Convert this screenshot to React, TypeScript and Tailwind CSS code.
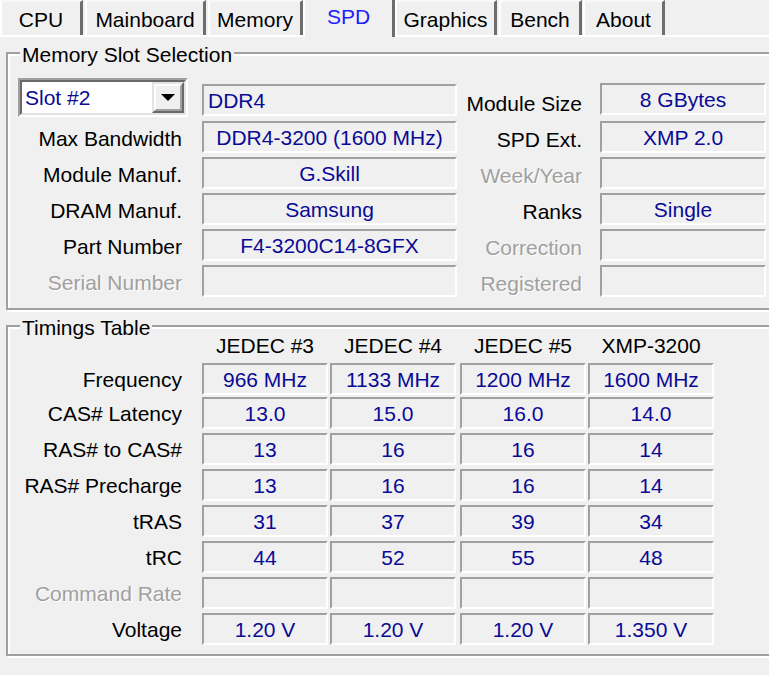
import React from "react";

type FieldProps = { value?: string; className?: string; left?: boolean };

function Field({ value = "", className = "", left }: FieldProps) {
  return (
    <div
      className={`flex h-[32px] shrink-0 items-center border-2 border-t-[#a0a0a0] border-l-[#a0a0a0] border-b-white border-r-white text-[#0a0a96] ${
        left ? "justify-start pl-[4px]" : "justify-center"
      } ${className}`}
    >
      {value}
    </div>
  );
}

function Label({ text, dim, className = "" }: { text: string; dim?: boolean; className?: string }) {
  return (
    <div
      className={`shrink-0 whitespace-nowrap text-right ${
        dim ? "text-[#a0a0a0] [text-shadow:1px_1px_0_#fff]" : "text-black"
      } ${className}`}
    >
      {text}
    </div>
  );
}

function GroupBox({ title, className = "", children }: { title: string; className?: string; children: React.ReactNode }) {
  return (
    <div
      className={`relative ml-[6px] w-[790px] border-2 border-[#a0a0a0] shadow-[inset_2px_2px_0_#fff,2px_2px_0_#fff] ${className}`}
    >
      <span className="absolute -top-[10px] left-[12px] bg-[#f0f0f0] px-[2px] text-black">{title}</span>
      {children}
    </div>
  );
}

const tabs = [
  { name: "CPU", cls: "w-[83px]" },
  { name: "Mainboard", cls: "ml-[2px] w-[121px]" },
  { name: "Memory", cls: "ml-[2px] w-[95px] border-r-0" },
  { name: "SPD", cls: "w-[92px]", active: true },
  { name: "Graphics", cls: "w-[102px]" },
  { name: "Bench", cls: "ml-[2px] w-[83px]" },
  { name: "About", cls: "ml-[1px] w-[82px]" },
];

const slotRows: { l: string; v: string; r: string; rv: string; ld?: boolean; rd?: boolean }[] = [
  { l: "Max Bandwidth", v: "DDR4-3200 (1600 MHz)", r: "SPD Ext.", rv: "XMP 2.0" },
  { l: "Module Manuf.", v: "G.Skill", r: "Week/Year", rv: "", rd: true },
  { l: "DRAM Manuf.", v: "Samsung", r: "Ranks", rv: "Single" },
  { l: "Part Number", v: "F4-3200C14-8GFX", r: "Correction", rv: "", rd: true },
  { l: "Serial Number", v: "", r: "Registered", rv: "", ld: true, rd: true },
];

const colMargins = ["ml-[20px]", "ml-[2px]", "ml-[4px]", "ml-[2px]"];
const headers = ["JEDEC #3", "JEDEC #4", "JEDEC #5", "XMP-3200"];

const timingRows: { label: string; vals: string[]; dim?: boolean }[] = [
  { label: "Frequency", vals: ["966 MHz", "1133 MHz", "1200 MHz", "1600 MHz"] },
  { label: "CAS# Latency", vals: ["13.0", "15.0", "16.0", "14.0"] },
  { label: "RAS# to CAS#", vals: ["13", "16", "16", "14"] },
  { label: "RAS# Precharge", vals: ["13", "16", "16", "14"] },
  { label: "tRAS", vals: ["31", "37", "39", "34"] },
  { label: "tRC", vals: ["44", "52", "55", "48"] },
  { label: "Command Rate", vals: ["", "", "", ""], dim: true },
  { label: "Voltage", vals: ["1.20 V", "1.20 V", "1.20 V", "1.350 V"] },
];

export default function App() {
  return (
    <div className="h-[675px] w-[769px] overflow-hidden bg-[#f0f0f0] font-['Liberation_Sans',Arial,sans-serif] text-[21px] leading-none">
      <div className="w-[820px]">
        {/* Tab strip */}
        <div className="flex h-[37px] items-start shadow-[inset_0_-2px_0_#fff]">
          {tabs.map((t) =>
            t.active ? (
              <div
                key={t.name}
                className={`relative z-10 flex h-[37px] shrink-0 items-center justify-center border-l-2 border-r-[3px] border-l-white border-r-[#6d6d6d] bg-[#f0f0f0] pb-[4px] text-[#2020ff] ${t.cls}`}
              >
                {t.name}
              </div>
            ) : (
              <div
                key={t.name}
                className={`flex h-[35px] shrink-0 items-center justify-center border-t-2 border-l-2 border-r-[3px] border-t-[#f8f8f8] border-l-white border-r-[#6d6d6d] pt-[2px] text-black ${t.cls}`}
              >
                {t.name}
              </div>
            )
          )}
        </div>

        {/* Memory Slot Selection */}
        <GroupBox title="Memory Slot Selection" className="mt-[15px] pt-[24px] pb-[11px]">
          <div className="flex h-[39px] items-start">
            <div className="ml-[10px] h-[39px] w-[170px] shrink-0 border-2 border-t-[#a0a0a0] border-l-[#a0a0a0] border-b-white border-r-white">
              <div className="flex h-full items-stretch border-2 border-t-[#696969] border-l-[#696969] border-b-[#e3e3e3] border-r-[#e3e3e3] bg-white">
                <div className="flex flex-1 items-center pl-[3px] text-[#0a0a96]">Slot #2</div>
                <div className="w-[32px] border-2 border-t-[#e3e3e3] border-l-[#e3e3e3] border-b-[#696969] border-r-[#696969]">
                  <div className="flex h-full items-center justify-center border-2 border-t-white border-l-white border-b-[#a0a0a0] border-r-[#a0a0a0] bg-[#f0f0f0]">
                    <svg width="14" height="7" viewBox="0 0 14 7">
                      <polygon points="0,0 14,0 7,7" fill="#000" />
                    </svg>
                  </div>
                </div>
              </div>
            </div>
            <Field value="DDR4" left className="ml-[14px] mt-[6px] w-[255px]" />
            <Label text="Module Size" className="mt-[15px] w-[125px]" />
            <Field value="8 GBytes" className="ml-[18px] mt-[5px] w-[166px]" />
          </div>
          {slotRows.map((r) => (
            <div key={r.l} className="mt-[4px] flex h-[32px] items-center">
              <Label text={r.l} dim={r.ld} className="w-[174px] translate-y-[1px]" />
              <Field value={r.v} className="ml-[20px] w-[255px]" />
              <Label text={r.r} dim={r.rd} className="w-[125px] translate-y-[2px]" />
              <Field value={r.rv} className="ml-[18px] w-[166px]" />
            </div>
          ))}
        </GroupBox>

        {/* Timings Table */}
        <GroupBox title="Timings Table" className="mt-[15px] pb-[9px]">
          <div className="flex h-[36px] items-center">
            <div className="w-[174px] shrink-0" />
            {headers.map((h, i) => (
              <div key={h} className={`w-[126px] shrink-0 text-center text-black ${colMargins[i]}`}>
                {h}
              </div>
            ))}
          </div>
          {timingRows.map((r, ri) => (
            <div
              key={r.label}
              className={`flex h-[32px] items-center ${ri === 0 ? "" : ri === 1 ? "mt-[2px]" : "mt-[4px]"}`}
            >
              <Label text={r.label} dim={r.dim} className="w-[174px]" />
              {r.vals.map((v, i) => (
                <Field key={i} value={v} className={`w-[126px] ${colMargins[i]}`} />
              ))}
            </div>
          ))}
        </GroupBox>
      </div>
    </div>
  );
}
